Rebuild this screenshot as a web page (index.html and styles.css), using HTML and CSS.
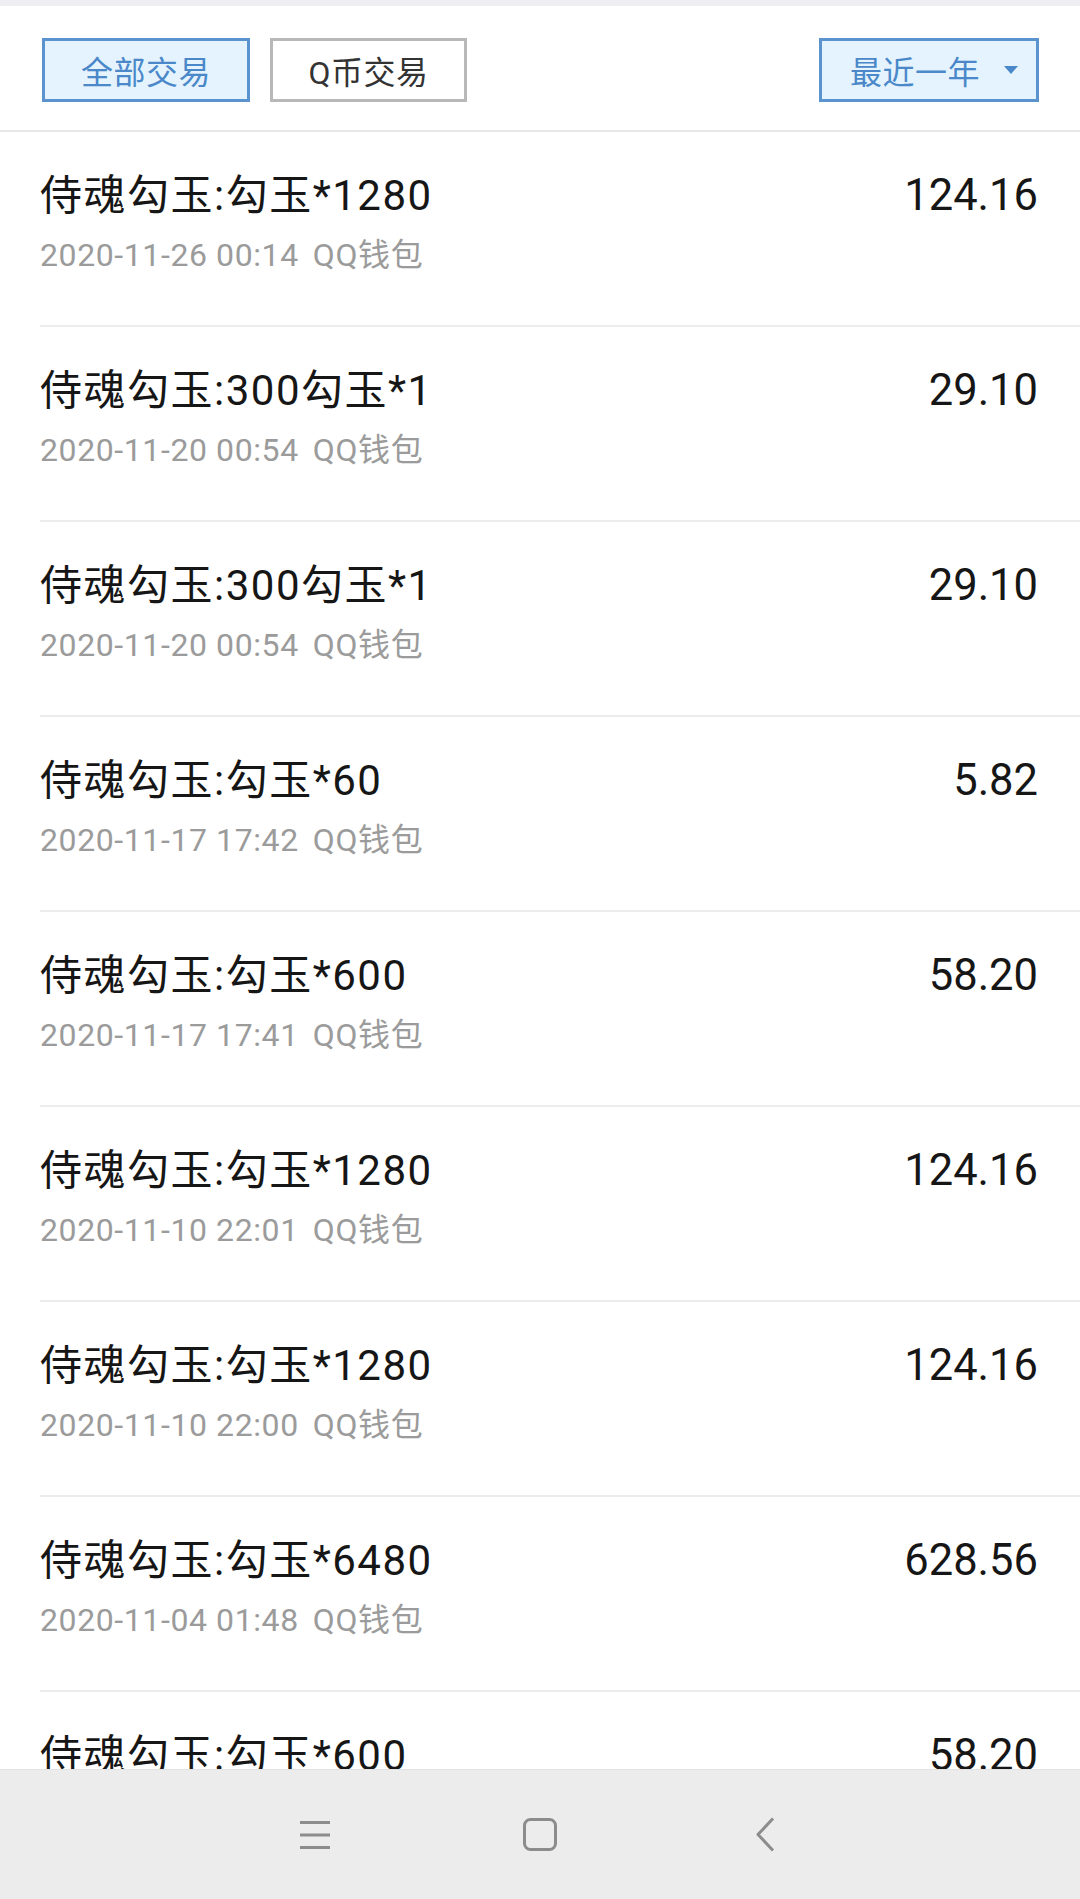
FILE: index.html
```html
<!DOCTYPE html>
<html lang="zh-CN">
<head>
  <meta charset="UTF-8">
  <title>交易记录</title>
  <link rel="stylesheet" href="styles.css">
</head>
<body>

  <div class="tela">
    <!-- filtros -->
    <div class="topo">
      <div class="filtros">
        <div class="botao ativo largo">全部交易</div>
        <div class="botao">Q币交易</div>
      </div>
      <div class="botao ativo periodo">最近一年 <span class="seta"></span></div>
    </div>

    <!-- lista de transacoes -->
    <div class="lista">
      <div class="item">
        <div class="info">
          <div class="titulo">侍魂勾玉:勾玉*1280</div>
          <div class="data">2020-11-26 00:14<span class="origem">QQ钱包</span></div>
        </div>
        <div class="valor">124.16</div>
      </div>
      <div class="item">
        <div class="info">
          <div class="titulo">侍魂勾玉:300勾玉*1</div>
          <div class="data">2020-11-20 00:54<span class="origem">QQ钱包</span></div>
        </div>
        <div class="valor">29.10</div>
      </div>
      <div class="item">
        <div class="info">
          <div class="titulo">侍魂勾玉:300勾玉*1</div>
          <div class="data">2020-11-20 00:54<span class="origem">QQ钱包</span></div>
        </div>
        <div class="valor">29.10</div>
      </div>
      <div class="item">
        <div class="info">
          <div class="titulo">侍魂勾玉:勾玉*60</div>
          <div class="data">2020-11-17 17:42<span class="origem">QQ钱包</span></div>
        </div>
        <div class="valor">5.82</div>
      </div>
      <div class="item">
        <div class="info">
          <div class="titulo">侍魂勾玉:勾玉*600</div>
          <div class="data">2020-11-17 17:41<span class="origem">QQ钱包</span></div>
        </div>
        <div class="valor">58.20</div>
      </div>
      <div class="item">
        <div class="info">
          <div class="titulo">侍魂勾玉:勾玉*1280</div>
          <div class="data">2020-11-10 22:01<span class="origem">QQ钱包</span></div>
        </div>
        <div class="valor">124.16</div>
      </div>
      <div class="item">
        <div class="info">
          <div class="titulo">侍魂勾玉:勾玉*1280</div>
          <div class="data">2020-11-10 22:00<span class="origem">QQ钱包</span></div>
        </div>
        <div class="valor">124.16</div>
      </div>
      <div class="item">
        <div class="info">
          <div class="titulo">侍魂勾玉:勾玉*6480</div>
          <div class="data">2020-11-04 01:48<span class="origem">QQ钱包</span></div>
        </div>
        <div class="valor">628.56</div>
      </div>
      <div class="item">
        <div class="info">
          <div class="titulo">侍魂勾玉:勾玉*600</div>
          <div class="data">2020-11-03 20:12<span class="origem">QQ钱包</span></div>
        </div>
        <div class="valor">58.20</div>
      </div>
    </div>

    <!-- barra de navegacao do sistema -->
    <div class="navbar">
      <svg class="icone" width="60" height="40" viewBox="0 0 60 40">
        <path d="M15 7.5h30M15 20h30M15 32.5h30" stroke="#8c8c8c" stroke-width="3" fill="none"/>
      </svg>
      <svg class="icone" width="60" height="40" viewBox="0 0 60 40">
        <rect x="14.5" y="4.5" width="31" height="30" rx="6" stroke="#8c8c8c" stroke-width="3" fill="none"/>
      </svg>
      <svg class="icone" width="60" height="40" viewBox="0 0 60 40">
        <path d="M38 3.5L23 19.5L38 35.5" stroke="#8c8c8c" stroke-width="3" fill="none" stroke-linejoin="round"/>
      </svg>
    </div>
  </div>

</body>
</html>
```

FILE: styles.css
```css
* {
  box-sizing: border-box;
}

body {
  margin: 0;
  padding: 0;
  font-family: Roboto, "Noto Sans CJK SC", sans-serif;
  background: #ffffff;
  color: #1a1a1a;
}

.tela {
  display: flex;
  flex-direction: column;
  height: 1899px;
  overflow: hidden;
}

.topo {
  display: flex;
  justify-content: space-between;
  align-items: center;
  border-top: 6px solid #eeeef3;
  border-bottom: 2px solid #e8e8e8;
  padding: 32px 41px 28px 42px;
  background: #fff;
}

.filtros {
  display: flex;
  gap: 20px;
}

.botao {
  height: 64px;
  width: 197px;
  display: flex;
  align-items: center;
  justify-content: center;
  font-size: 32px;
  letter-spacing: 0.5px;
  color: #333;
  border: 3px solid #b8b8b8;
  background: #fff;
}

.botao.largo {
  width: 208px;
}

.botao.ativo {
  color: #4a88c9;
  border-color: #5b93cf;
  background: #e4f3fd;
}

.botao.periodo {
  width: 220px;
  padding-left: 10px;
}

.seta {
  width: 0;
  height: 0;
  margin-left: 24px;
  border-left: 7px solid transparent;
  border-right: 7px solid transparent;
  border-top: 8px solid #4a88c9;
}

.lista {
  flex: 1;
  overflow: hidden;
}

.item {
  display: flex;
  justify-content: space-between;
  align-items: flex-start;
  height: 195px;
  margin-left: 40px;
  padding-right: 42px;
  border-bottom: 2px solid #ececec;
}

.info {
  padding-top: 40px;
}

.titulo {
  font-size: 42px;
  line-height: 48px;
  letter-spacing: 1.5px;
  color: #161616;
}

.data {
  margin-top: 15px;
  font-size: 32px;
  line-height: 40px;
  letter-spacing: 0.6px;
  color: #9b9b9b;
}

.origem {
  margin-left: 14px;
}

.valor {
  padding-top: 40px;
  font-size: 43.5px;
  line-height: 48px;
  color: #161616;
}

.navbar {
  height: 130px;
  flex-shrink: 0;
  display: flex;
  justify-content: center;
  align-items: center;
  gap: 165px;
  background: #ececec;
  border-top: 1px solid #e2e2e2;
}
```
